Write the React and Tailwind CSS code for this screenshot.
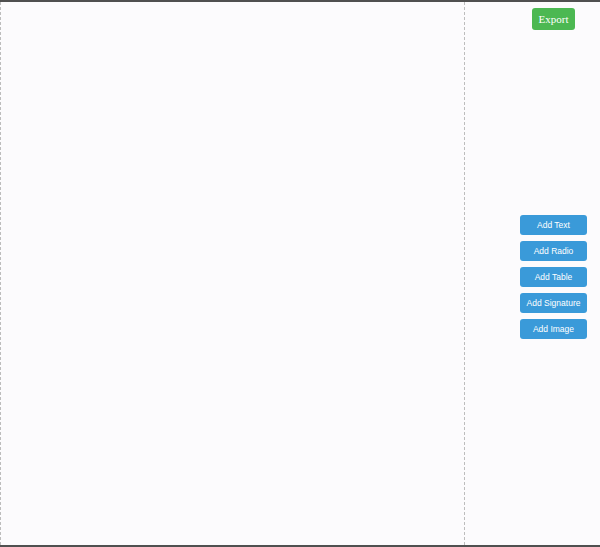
export default function App() {
  const buttons = ["Add Text", "Add Radio", "Add Table", "Add Signature", "Add Image"];
  return (
    <div className="w-[600px] h-[547px] border-y-2 border-[#505050] bg-[#fcfbfd] flex overflow-hidden">
      <div className="w-[465px] h-full border-x border-dashed border-[#bdbdbd] bg-[#fcfbfd]" />
      <div className="flex-1 flex flex-col items-end pr-[13px] pt-[6px]">
        <button className="w-[43px] h-[22px] mr-[12px] rounded-[3px] bg-[#4cb852] text-white text-[11px] leading-none" style={{ fontFamily: '"Liberation Serif", serif' }}>
          Export
        </button>
        <div className="mt-[185px] flex flex-col gap-[6.5px]">
          {buttons.map((b) => (
            <button
              key={b}
              className="w-[67px] h-[19.5px] rounded-[3px] bg-[#3a9ad9] text-white text-[8.5px] leading-none pt-px"
              style={{ fontFamily: '"Liberation Sans", Arial, sans-serif' }}
            >
              {b}
            </button>
          ))}
        </div>
      </div>
    </div>
  );
}
